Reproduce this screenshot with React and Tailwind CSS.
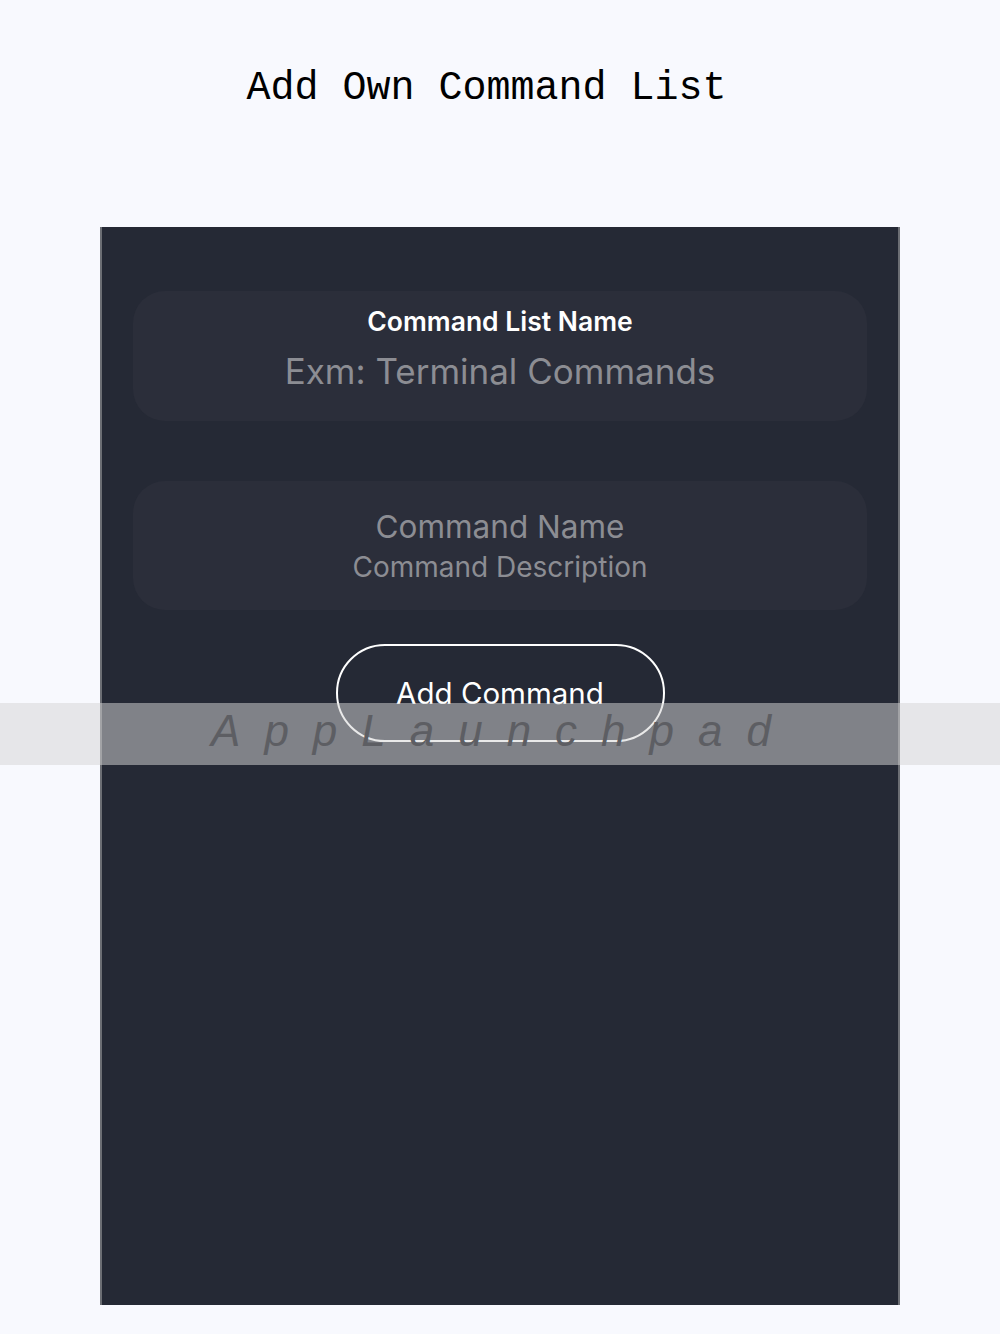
import React from "react";

const App = () => {
  return (
    <div className="relative min-h-[1334px] w-full bg-[#f8f9fe]">
      <div className="flex h-[227px] justify-center pr-[27px] pt-[62px]">
        <h1 className="text-[40px] leading-[54px] text-black font-['Liberation_Mono',monospace]">
          Add Own Command List
        </h1>
      </div>

      <div className="mx-auto flex h-[1078px] w-[800px] flex-col items-center border-x-2 border-[#6c6e74] bg-[#252935] px-[31px] pt-[64px] font-['Inter',sans-serif]">
        <div className="flex h-[130px] w-full flex-col items-center rounded-[32px] bg-[#2b2e3a] pt-[13px]">
          <div className="text-[26.5px] font-semibold leading-[34px] text-white">Command List Name</div>
          <div className="mt-[11px] text-[35px] leading-[44px] text-[#8c8d93]">Exm: Terminal Commands</div>
        </div>

        <div className="mt-[60px] flex h-[129px] w-full flex-col items-center justify-center rounded-[32px] bg-[#2b2e3a]">
          <div className="text-[31.5px] leading-[40px] text-[#8c8d93]">Command Name</div>
          <div className="mt-[2px] text-[28px] leading-[36px] text-[#8c8d93]">Command Description</div>
        </div>

        <button
          type="button"
          className="mt-[34px] flex h-[98px] w-[329px] items-center justify-center rounded-full border-2 border-white text-[29.5px] text-white"
        >
          Add Command
        </button>
      </div>

      <div className="absolute left-0 top-[703px] flex h-[62px] w-full items-center justify-center bg-[rgba(213,213,213,0.52)]">
        <span className="-mt-[7px] pl-[6px] text-[44px] italic tracking-[0.545em] text-[#5d5e63] font-['Liberation_Sans',sans-serif]">
          AppLaunchpad
        </span>
      </div>
    </div>
  );
};

export default App;
